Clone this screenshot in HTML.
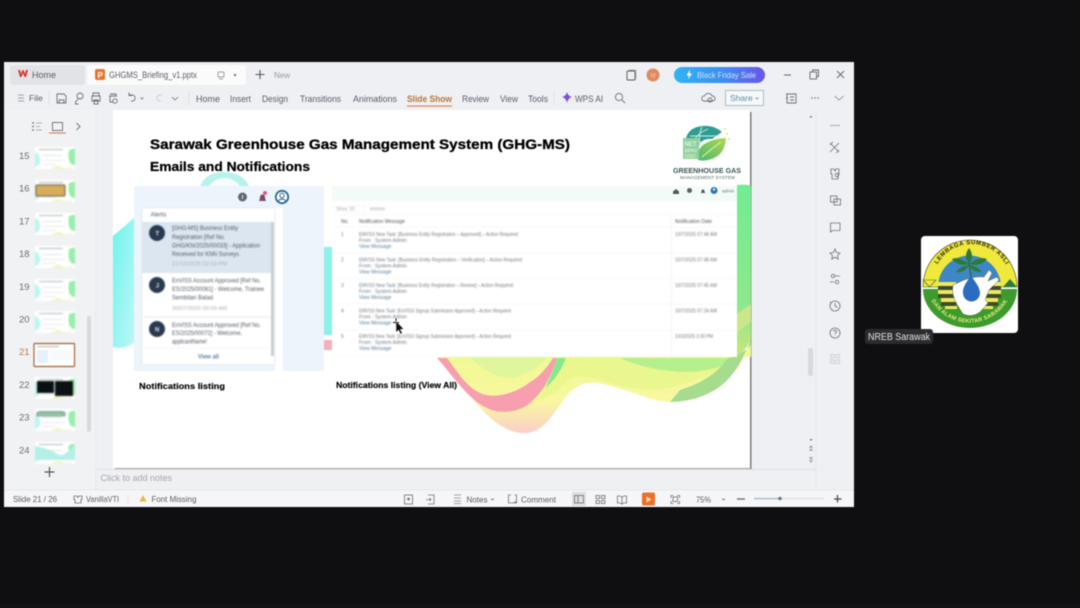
<!DOCTYPE html>
<html><head><meta charset="utf-8">
<style>
html,body{margin:0;padding:0;background:#0f0f11;width:1080px;height:608px;overflow:hidden}
svg{display:block;filter:blur(.4px)}
text{font-family:"Liberation Sans",sans-serif}
.t{font-size:9.5px;fill:#595d65}
.m{font-size:5px;fill:#777c84}
.a{font-size:6.2px;fill:#555b63}
.d{font-size:5.5px;fill:#aeb2b8}
.i{fill:none;stroke:#6a6e75;stroke-width:.9}
.r{fill:none;stroke:#70747a;stroke-width:.85}
.h{font-weight:bold;fill:#000}
.n{font-size:9.5px;fill:#6a6e74}
.soft{filter:blur(.45px)}
.thb{filter:blur(.7px)}
</style></head>
<body>
<svg width="1080" height="608" viewBox="0 0 1080 608" xmlns="http://www.w3.org/2000/svg">
<defs>
<linearGradient id="cy" x1="0" y1="0" x2="1" y2="1"><stop offset="0" stop-color="#6ff3ec"/><stop offset="1" stop-color="#bdf8f6"/></linearGradient>
<linearGradient id="gr" x1="0" y1="0" x2="0" y2="1"><stop offset="0" stop-color="#72ec94"/><stop offset=".7" stop-color="#8ee88c"/><stop offset="1" stop-color="#c8e67c"/></linearGradient>
<linearGradient id="bf" x1="0" y1="0" x2="1" y2="0"><stop offset="0" stop-color="#2fb4f5"/><stop offset=".55" stop-color="#3f8cf2"/><stop offset="1" stop-color="#6a55e8"/></linearGradient>
<linearGradient id="wv" x1="0" y1="0" x2="0" y2="1"><stop offset="0" stop-color="#edfa8e"/><stop offset=".65" stop-color="#f9f8a0"/><stop offset="1" stop-color="#fbcfc8"/></linearGradient>
<linearGradient id="lf" x1="0" y1="1" x2="1" y2="0"><stop offset="0" stop-color="#4cb870"/><stop offset="1" stop-color="#b0d84a"/></linearGradient>
<g id="th">
<rect width="40" height="22" fill="#fff"/>
<path d="M0 5Q4 6 5 12T0 20Z" fill="#bcf6f2"/>
<path d="M34 3Q40 1 40 2V18Q35 18 34 13T34 3Z" fill="#98eeab"/>
<path d="M16 22Q22 17 27 20T36 19V22Z" fill="#f0f6c8"/>
<rect x="4" y="2" width="24" height="1" fill="#b0b8ba"/>
<rect x="7" y="8" width="20" height=".7" fill="#d4dadc"/>
<rect x="7" y="13" width="22" height=".7" fill="#dce2e4"/>
<rect x="7" y="17" width="14" height=".7" fill="#dce2e4"/>
</g>
<clipPath id="ringclip"><path d="M923 280H1017V290A47 40 0 0 1 923 290Z"/></clipPath>
</defs>

<rect width="1080" height="608" fill="#0f0f11"/>
<rect x="0" y="604" width="1080" height="4" fill="#141416"/>

<!-- window -->
<rect x="4" y="62" width="850" height="445" fill="#eff0f3"/>
<rect x="10" y="65" width="75" height="20" rx="3" fill="#e2e3e6"/>
<rect x="87" y="65" width="159" height="20" rx="3" fill="#fbfbfc"/>
<path d="M18 70h2l1 4 1.500-4h1l1.500 4 1-4h2l-2 7h-1.500l-1.500-4-1.500 4h-1.500z" fill="#d8342c"/>
<text x="32" y="78" class="t" style="font-size:9px">Home</text>
<rect x="95" y="69" width="10" height="11" rx="2" fill="#e8742c"/>
<text x="97.500" y="78" style="font-size:8px;font-weight:bold" fill="#fff">P</text>
<text x="109" y="78" class="t" style="font-size:9px" textLength="88" lengthAdjust="spacingAndGlyphs">GHGMS_Briefing_v1.pptx</text>
<rect x="218" y="72" width="6" height="5" rx="1" class="i" style="stroke:#999"/>
<path d="M219 79h4" class="i" style="stroke:#999"/>
<circle cx="235" cy="75" r="1.200" fill="#777"/>
<path d="M260 70v9M255.500 74.500h9" stroke="#555" stroke-width="1.100"/>
<text x="274" y="78" style="font-size:8px" fill="#999">New</text>

<rect x="627" y="71" width="8" height="9" rx="1" class="i" style="stroke:#555"/><path d="M629 70h7v9" class="i" style="stroke:#999;stroke-width:.7"/>
<circle cx="653" cy="75" r="6.500" fill="#e28a5e"/><text x="650.500" y="77.500" style="font-size:6px" fill="#f6c9b0">M</text>
<rect x="674" y="67" width="91" height="16" rx="8" fill="url(#bf)"/>
<path d="M690 69.500l-3.500 6h2.500l-1 4 4-6h-2.500z" fill="#fff"/>
<text x="697" y="78" style="font-size:8.500px" fill="#cfe0fb" textLength="59" lengthAdjust="spacingAndGlyphs">Black Friday Sale</text>
<path d="M784 75h7" stroke="#666" stroke-width="1"/>
<rect x="810" y="72" width="6.500" height="7" class="i" style="stroke:#666"/><path d="M812.500 72v-2h6v6.500h-2" class="i" style="stroke:#666"/>
<path d="M837 71l7 7M844 71l-7 7" stroke="#666" stroke-width=".9"/>

<!-- toolbar -->
<path d="M18 95h6M18 98h6M18 101h6" stroke="#888" stroke-width=".8"/>
<text x="29" y="101" class="t" style="font-size:8.500px">File</text>
<path d="M49 91v14" stroke="#dfe0e3"/>
<path d="M57 94h7l2 2v7h-9zM59 103v-3h5v3" class="i"/>
<circle cx="80" cy="96" r="3" class="i"/><path d="M78 99l-2.500 3v2h3" class="i"/>
<path d="M93 96v-3h6v3M92 96h8v5h-8zM94 100h4v4h-4z" class="i"/>
<path d="M110 94h6v2M109 96h8M110 96v6h3" class="i"/><circle cx="115" cy="101" r="2.200" class="i"/>
<path d="M129 95h4a3 3 0 1 1-2 6" class="i"/><path d="M129 92.500v3h3" class="i"/>
<path d="M140.500 97.500l1.500 1.500 1.500-1.500" class="i" style="stroke-width:.8"/>
<path d="M162 95h-3a3 3 0 1 0 2 6" class="i" style="stroke:#c9cbcf"/>
<path d="M172 97l3 3 3-3" class="i" style="stroke:#888"/>
<path d="M189 91v14" stroke="#dfe0e3"/>
<g class="t">
<text x="196" y="102" textLength="24" lengthAdjust="spacingAndGlyphs">Home</text>
<text x="230" y="102" textLength="21" lengthAdjust="spacingAndGlyphs">Insert</text>
<text x="262" y="102" textLength="26" lengthAdjust="spacingAndGlyphs">Design</text>
<text x="300" y="102" textLength="41" lengthAdjust="spacingAndGlyphs">Transitions</text>
<text x="353" y="102" textLength="44" lengthAdjust="spacingAndGlyphs">Animations</text>
<text x="462" y="102" textLength="27" lengthAdjust="spacingAndGlyphs">Review</text>
<text x="500" y="102" textLength="18" lengthAdjust="spacingAndGlyphs">View</text>
<text x="528" y="102" textLength="20" lengthAdjust="spacingAndGlyphs">Tools</text>
<text x="575" y="102" textLength="28" lengthAdjust="spacingAndGlyphs">WPS AI</text>
</g>
<text x="407" y="102" style="font-size:9.500px;font-weight:bold" fill="#b8763f" textLength="45" lengthAdjust="spacingAndGlyphs">Slide Show</text>
<rect x="407" y="105.500" width="45" height="1.200" fill="#d98a5a"/>
<path d="M554 91v14" stroke="#e2e3e6"/>
<path d="M567 92q1 4 5 5q-4 1-5 6q-1-5-5-6q4-1 5-5z" fill="#7a52e0"/>
<circle cx="619" cy="97" r="3.600" class="i"/><path d="M622 100l3 3" class="i"/>
<path d="M704 101a2.500 2.500 0 0 1 .5-5a4 4 0 0 1 7.500 0a2.500 2.500 0 0 1 1 5z" class="i"/><circle cx="710" cy="100" r="2" class="i"/>
<rect x="725.500" y="90.500" width="38" height="15" fill="#f7f8fa" stroke="#a9bdc9"/>
<text x="730" y="101" style="font-size:8.500px" fill="#5d8aa3">Share</text>
<path d="M755.500 97.500l1.500 1.500 1.500-1.500" class="i" style="stroke:#888;stroke-width:.8"/>
<path d="M787 94h9v9h-9zM786 98h2M786 94h2M790 97h4M790 100h4" class="i"/>
<circle cx="812" cy="98" r=".7" fill="#666"/><circle cx="815" cy="98" r=".7" fill="#666"/><circle cx="818" cy="98" r=".7" fill="#666"/>
<path d="M834.500 96l4.500 4 4.500-4" class="i" style="stroke:#999"/>

<!-- left panel -->
<rect x="4" y="110" width="92" height="380" fill="#f1f2f4"/>
<path d="M96 110v380" stroke="#e6e7ea"/>
<path d="M32 123h2M32 126.500h2M32 130h2" stroke="#777" stroke-width="1.200"/><path d="M36 123h6M36 126.500h4M36 130h6" stroke="#999" stroke-width=".8"/>
<rect x="52.500" y="122.500" width="10" height="8" class="i"/>
<rect x="49" y="132.500" width="17" height="1" fill="#d4724a"/>
<path d="M76.500 123l3.500 3.500-3.500 3.500" class="i"/>
<text x="19" y="159" class="n">15</text><text x="19" y="191.500" class="n">16</text><text x="19" y="224.500" class="n">17</text><text x="19" y="257" class="n">18</text><text x="19" y="290" class="n">19</text><text x="19" y="322.500" class="n">20</text>
<text x="19" y="355" class="n" style="fill:#b77a50">21</text><text x="19" y="388" class="n">22</text><text x="19" y="420.500" class="n">23</text><text x="19" y="453.500" class="n">24</text>
<g class="thb">
<use href="#th" x="35" y="147"/>
<use href="#th" x="35" y="180"/><rect x="36" y="185" width="29" height="11" rx="1" fill="#d6ad5c" stroke="#5e5a40"/>
<use href="#th" x="35" y="213"/>
<use href="#th" x="35" y="246"/>
<use href="#th" x="35" y="279"/>
<use href="#th" x="35" y="311"/>
<use href="#th" x="35" y="377"/><rect x="37" y="381" width="17" height="12" fill="#081014"/><rect x="55" y="381" width="18" height="15" fill="#0c1214"/>
<use href="#th" x="35" y="409"/><rect x="37" y="412" width="28" height="4" rx="1" fill="#8fc9a8" stroke="#4c6a5a" stroke-width=".6"/>
<use href="#th" x="35" y="442"/><path d="M35 446q16 3 22 8t18-10v16H35z" fill="#b4f0e8"/>
</g>
<rect x="34" y="343.500" width="40.500" height="23" rx="1" fill="#fff" stroke="#b27a50" stroke-width="1.400"/>
<g class="thb"><rect x="37" y="350" width="11" height="13" fill="#e4f0fa"/><rect x="50" y="350" width="22" height="10" fill="#f7f9fa"/><rect x="37" y="346" width="22" height="1" fill="#aab"/></g>
<rect x="87" y="316" width="4" height="116" rx="2" fill="#d8d9dc"/>
<path d="M49.500 467v10M44.500 472h10" stroke="#555" stroke-width="1.200"/>

<!-- canvas -->
<rect x="96" y="110" width="720" height="359" fill="#eff0f3"/>
<rect x="115" y="112" width="636.500" height="357.500" fill="#a2a2a2"/>
<rect x="750" y="112" width="1.500" height="358" fill="#7d7d7d"/>
<rect x="113" y="110" width="637" height="358" fill="#fff"/>

<!-- slide decorations -->
<path d="M113 236L134 218V343Q124 350 113 347Z" fill="url(#cy)"/>
<path d="M200 186Q206 172 224 172Q242 172 249 186Z" fill="#b7f3ec"/>
<path d="M209 186Q215 178 224 178Q234 178 240 186Z" fill="#f4fdfc"/>
<rect x="324" y="247" width="8" height="88" fill="#8df0ea"/>
<rect x="324" y="340" width="8" height="10" fill="#f4b0ba"/>
<path d="M737 185Q748 184 751 186V340Q746 350 737 357Z" fill="url(#gr)"/>
<path d="M737 314L751 304V322L737 332Z" fill="#d8e68c" opacity=".8"/>
<path d="M437 357C463 380 487 432 523 433C550 435 560 395 577 387C590 378 610 385 640 395C670 408 695 402 725 380C740 370 745 355 751 340V357Z" fill="url(#wv)"/>
<path d="M470 357Q490 378 512 378Q535 372 548 357Z" fill="#dff79a"/>
<path d="M437 358C450 372 468 400 487 408C500 415 520 412 530 403C542 393 551 378 557 358L553 358C547 368 538 378 530 382C518 392 495 400 480 393C465 386 455 368 447 358Z" fill="#f79fae"/>
<path d="M557 358C552 378 544 392 536 402C550 397 560 390 566 382C572 376 584 375 600 380C625 388 645 392 668 388C695 382 725 370 742 357Z" fill="#eaf78e"/>
<path d="M557 358Q552 375 545 388Q558 378 566 358Z" fill="#84ea8c"/>
<path d="M620 358Q650 372 690 372Q720 370 742 358Z" fill="#b6f08c"/>
<path d="M670 402C690 402 715 395 730 377C740 365 746 352 751 340V345C745 352 735 357 728 358C718 372 705 382 680 390Z" fill="#a6dc8e"/>

<text x="150" y="149" class="h" style="font-size:14px;stroke:#000;stroke-width:.3" textLength="420" lengthAdjust="spacingAndGlyphs">Sarawak Greenhouse Gas Management System (GHG-MS)</text>
<text x="150" y="171" class="h" style="font-size:13px;stroke:#000;stroke-width:.25" textLength="160" lengthAdjust="spacingAndGlyphs">Emails and Notifications</text>

<!-- logo -->
<path d="M685 146Q685 127 703 126Q714 125 722 132L712 139Q702 138 699 146Z" fill="#2f9c92"/>
<path d="M692 146Q695 134 708 129M702 127Q698 135 700 146M690 136L716 136M687 142H702" fill="none" stroke="#d4eee9" stroke-width=".9"/>
<path d="M698 160Q696 148 706 143Q716 138 726 138Q725 152 716 157Q707 162 698 160Z" fill="url(#lf)"/>
<path d="M702 157Q710 150 721 142" stroke="#e8f3cc" stroke-width=".9" fill="none"/>
<rect x="683" y="138" width="16" height="21" fill="#8fd1a0"/>
<text x="684.500" y="146" style="font-size:6px" fill="#fff">NET</text><text x="684.500" y="152" style="font-size:4.500px" fill="#fff">ZERO</text><text x="684.500" y="158" style="font-size:5px" fill="#eef6b0">2050</text>
<circle cx="727" cy="134" r=".9" fill="#d8cc60"/><circle cx="729" cy="139" r=".9" fill="#d8cc60"/><circle cx="725" cy="129" r=".9" fill="#bcd890"/>
<text x="673" y="173" style="font-size:7.500px;font-weight:bold" fill="#3f5656" textLength="68" lengthAdjust="spacingAndGlyphs">GREENHOUSE GAS</text>
<text x="680" y="179" style="font-size:4.500px" fill="#566c6c" textLength="55" lengthAdjust="spacingAndGlyphs">MANAGEMENT SYSTEM</text>

<!-- left screenshot -->
<rect x="134" y="186" width="190" height="185" fill="#edf4fb"/>
<rect x="275" y="208" width="8" height="163" fill="#fff"/>
<circle cx="242.500" cy="197" r="4.500" fill="#5e6a74"/><rect x="242" y="195" width="1" height="4" fill="#ddd"/>
<path d="M259 201q1-2 1-4a2.500 2.500 0 0 1 5 0q0 2 1 4z" fill="#7a4a68"/><circle cx="265" cy="193" r="2" fill="#e05a78"/>
<circle cx="282" cy="197" r="6.200" fill="#fff" stroke="#2c6a92" stroke-width="1.800"/><circle cx="282" cy="195.500" r="2.200" fill="none" stroke="#2c6a92"/><path d="M278 201q4-4 8 0" fill="none" stroke="#2c6a92"/>
<rect x="142" y="208" width="133" height="156.500" rx="2" fill="#fff" stroke="#dde2e8" stroke-width=".6"/>
<g class="soft">
<text x="150.500" y="216.500" class="a">Alerts</text>
<rect x="142" y="222" width="131" height="51" fill="#dbe6f1"/>
<rect x="271" y="222" width="3" height="134" fill="#c6ccd3"/>
<path d="M143 317h129" stroke="#d2d6da" stroke-width=".6"/>
<path d="M143 348h130" stroke="#eceef0" stroke-width=".6"/>
<circle cx="157" cy="233" r="8" fill="#2a3a4e"/><text x="155.500" y="235.500" style="font-size:6px;font-weight:bold" fill="#dfe6ee">T</text>
<circle cx="157" cy="285" r="8" fill="#2a3a4e"/><text x="155.800" y="287.500" style="font-size:6px;font-weight:bold" fill="#dfe6ee">J</text>
<circle cx="157" cy="329" r="8" fill="#2a3a4e"/><text x="155" y="331.500" style="font-size:6px;font-weight:bold" fill="#dfe6ee">N</text>
<text x="172" y="230" class="a" textLength="66" lengthAdjust="spacingAndGlyphs">[GHG-MS] Business Entity</text>
<text x="172" y="239" class="a" textLength="53" lengthAdjust="spacingAndGlyphs">Registration [Ref No.</text>
<text x="172" y="247.500" class="a" textLength="88" lengthAdjust="spacingAndGlyphs">GHG/KN/2025/00033] - Application</text>
<text x="172" y="256" class="a" textLength="67" lengthAdjust="spacingAndGlyphs">Received for KNN Surveys</text>
<text x="172" y="265.500" class="d" textLength="55" lengthAdjust="spacingAndGlyphs">21/10/2025 02:19 PM</text>
<text x="172" y="282.500" class="a" textLength="89" lengthAdjust="spacingAndGlyphs">EnVISS Account Approved [Ref No.</text>
<text x="172" y="291" class="a" textLength="92" lengthAdjust="spacingAndGlyphs">ES/2025/00081] - Welcome, Trainee</text>
<text x="172" y="299.500" class="a" textLength="41" lengthAdjust="spacingAndGlyphs">Sembilan Balad</text>
<text x="172" y="310" class="d" textLength="55" lengthAdjust="spacingAndGlyphs">30/07/2025 09:09 AM</text>
<text x="172" y="327" class="a" textLength="89" lengthAdjust="spacingAndGlyphs">EnVISS Account Approved [Ref No.</text>
<text x="172" y="335" class="a" textLength="70" lengthAdjust="spacingAndGlyphs">ES/2025/00072] - Welcome,</text>
<text x="172" y="343.500" class="a" textLength="35" lengthAdjust="spacingAndGlyphs">applicantName!</text>
<text x="198" y="358.500" style="font-size:6.800px;font-weight:bold" fill="#5a86a8" textLength="21" lengthAdjust="spacingAndGlyphs">View all</text>
</g>

<!-- right screenshot -->
<rect x="332" y="186" width="405" height="171" fill="#fff"/>
<rect x="332" y="186" width="405" height="15" fill="#f3fbf8"/>
<path d="M673 191.500l3-2.500 3 2.500v2.500h-6z" fill="#555"/>
<circle cx="689.500" cy="190.500" r="2.500" fill="#606060"/>
<path d="M700.500 193l1-1v-1a1.500 1.500 0 0 1 3 0v1l1 1z" fill="#555"/>
<circle cx="714" cy="190.500" r="3.500" fill="#2a78b0"/><circle cx="714" cy="189.500" r="1.200" fill="#e8f2f8"/>
<text x="722" y="192.500" style="font-size:4.500px" fill="#777">admin</text>
<g class="soft">
<text x="336" y="210.500" class="m" style="fill:#aaa">Show</text><rect x="347" y="206" width="18" height="6" fill="#fff" stroke="#eee" stroke-width=".5"/><text x="349" y="210.500" class="m" style="fill:#aaa">10</text>
<text x="370" y="210.500" class="m" style="fill:#aaa">entries</text>
<path d="M336 214.500H737M336 227H737M336 253H737M336 278.500H737M336 304H737M336 330H737M336 356H737" stroke="#f1f2f4" stroke-width=".6"/>
<path d="M671.500 214v142" stroke="#eceef0" stroke-width=".6"/>
<text x="341" y="223" class="m" style="fill:#555">No.</text>
<text x="359" y="223" class="m" style="fill:#555" textLength="46" lengthAdjust="spacingAndGlyphs">Notification Message</text>
<text x="675" y="223" class="m" style="fill:#555" textLength="37" lengthAdjust="spacingAndGlyphs">Notification Date</text>

<text x="341" y="236" class="m">1</text>
<text x="359" y="236" class="m" textLength="159" lengthAdjust="spacingAndGlyphs">EMVSS New Task: [Business Entity Registration – Approved] – Action Required</text>
<text x="359" y="242" class="m">From : System Admin</text><text x="359" y="248" class="m" style="fill:#5a7f9c">View Message</text>
<text x="675" y="236" class="m" textLength="42" lengthAdjust="spacingAndGlyphs">10/7/2025 07:48 AM</text>

<text x="341" y="261.500" class="m">2</text>
<text x="359" y="261.500" class="m" textLength="163" lengthAdjust="spacingAndGlyphs">EMVSS New Task: [Business Entity Registration – Verification] – Action Required</text>
<text x="359" y="267.500" class="m">From : System Admin</text><text x="359" y="273.500" class="m" style="fill:#5a7f9c">View Message</text>
<text x="675" y="261.500" class="m" textLength="42" lengthAdjust="spacingAndGlyphs">10/7/2025 07:48 AM</text>

<text x="341" y="287" class="m">3</text>
<text x="359" y="287" class="m" textLength="154" lengthAdjust="spacingAndGlyphs">EMVSS New Task: [Business Entity Registration – Review] – Action Required</text>
<text x="359" y="293" class="m">From : System Admin</text><text x="359" y="299" class="m" style="fill:#5a7f9c">View Message</text>
<text x="675" y="287" class="m" textLength="42" lengthAdjust="spacingAndGlyphs">10/7/2025 07:45 AM</text>

<text x="341" y="312.500" class="m">4</text>
<text x="359" y="312.500" class="m" textLength="152" lengthAdjust="spacingAndGlyphs">EMVSS New Task: [EnVISS Signup Submission Approved] – Action Required</text>
<text x="359" y="318.500" class="m">From : System Admin</text><text x="359" y="324.500" class="m" style="fill:#5a7f9c">View Message</text>
<text x="675" y="312.500" class="m" textLength="42" lengthAdjust="spacingAndGlyphs">10/7/2025 07:34 AM</text>

<text x="341" y="338" class="m">5</text>
<text x="359" y="338" class="m" textLength="152" lengthAdjust="spacingAndGlyphs">EMVSS New Task: [EnVISS Signup Submission Approved] – Action Required</text>
<text x="359" y="344" class="m">From : System Admin</text><text x="359" y="350" class="m" style="fill:#5a7f9c">View Message</text>
<text x="675" y="338" class="m" textLength="38" lengthAdjust="spacingAndGlyphs">10/3/2025 3:30 PM</text>
</g>

<!-- cursor -->
<path d="M396 318.500v5M393 322.500h6" stroke="#000" stroke-width="1"/>
<path d="M396 321l0 11.500 2.500-2.500 2 4 1.800-.8-2-3.800 3.500-.2z" fill="#111" stroke="#eee" stroke-width=".5"/>

<text x="139" y="389" class="h" style="font-size:8.500px;stroke:#000;stroke-width:.15" textLength="86" lengthAdjust="spacingAndGlyphs">Notifications listing</text>
<text x="336" y="388" class="h" style="font-size:8.500px;stroke:#000;stroke-width:.15" textLength="121" lengthAdjust="spacingAndGlyphs">Notifications listing (View All)</text>

<!-- right scroll / toolbar -->
<path d="M816 110v397" stroke="#e6e7ea"/>
<path d="M809.500 117.500l1.500-2 1.500 2z" fill="#777"/>
<rect x="808" y="348" width="5" height="28" rx="2" fill="#d8d9dc"/>
<path d="M809.500 439h3l-1.500 2z" fill="#777"/><path d="M809.500 448l1.500-2 1.500 2M809.500 451l1.500-2 1.500 2M809.500 457l1.500 2 1.500-2M809.500 460l1.500 2 1.500-2" fill="none" stroke="#777" stroke-width=".7"/>
<path d="M830 125.500h10" stroke="#aaa" stroke-width="1"/>
<path d="M830 143l9 9M839 143l-9 9M830 145l3-3M836 153l3-3" class="r"/>
<path d="M831 169h3l1 2 1-2h3v5h-1v5h-6v-5h-1z" class="r"/><circle cx="837" cy="175" r="1.800" class="r"/>
<rect x="830.500" y="196" width="6.500" height="6" class="r"/><rect x="834" y="199" width="6.500" height="6" class="r"/>
<path d="M830.500 223h9.500v7.500h-7.500l-2 1.500z" class="r"/>
<path d="M835 249l1.500 3.500 3.500.5-2.500 2.500.7 3.500-3.200-1.800-3.200 1.800.7-3.500-2.500-2.500 3.500-.5z" class="r"/>
<circle cx="833" cy="276" r="1.700" class="r"/><path d="M835 276h5M830 282h4" class="r"/><circle cx="837" cy="282" r="1.700" class="r"/>
<circle cx="835" cy="306" r="5" class="r"/><path d="M835 303v3l2.500 1.500M830 302l1 1" class="r"/>
<circle cx="835" cy="333" r="5" class="r"/><path d="M833.500 331.500a1.500 1.500 0 1 1 2 1.500l-.5 1M835 335.500v.5" class="r"/>
<g fill="none" stroke="#c9cbcf" stroke-width=".8"><rect x="830.500" y="354.500" width="3.500" height="3.500"/><rect x="836" y="354.500" width="3.500" height="3.500"/><rect x="830.500" y="360" width="3.500" height="3.500"/><rect x="836" y="360" width="3.500" height="3.500"/></g>

<!-- notes -->
<path d="M96 469.500H816" stroke="#dedfe2"/>
<text x="100.500" y="481" style="font-size:9px" fill="#a4a7ac">Click to add notes</text>

<!-- status bar -->
<rect x="4" y="490" width="850" height="17" fill="#f6f6f8"/>
<path d="M4 490H854" stroke="#e6e7ea"/>
<text x="13" y="502" class="t" style="font-size:8.500px" textLength="44" lengthAdjust="spacingAndGlyphs">Slide 21 / 26</text>
<path d="M74 496h3l1 1.500 1-1.500h3v3.500h-1v3.500h-6v-3.500h-1z" class="r"/>
<text x="86" y="502" class="t" style="font-size:8.500px" textLength="33" lengthAdjust="spacingAndGlyphs">VanillaVTI</text>
<path d="M128 494v11" stroke="#ece3e3"/>
<path d="M143 495l3.500 6.500h-7z" fill="#e8b84a"/>
<text x="151.500" y="502" class="t" style="font-size:8.500px" textLength="45" lengthAdjust="spacingAndGlyphs">Font Missing</text>
<rect x="404.500" y="495" width="8" height="9" class="r"/><circle cx="408.500" cy="499" r="1.300" fill="#666"/>
<path d="M428 495h6v9h-6M426 499.500h5M429.500 498l1.500 1.500-1.500 1.500" class="r"/>
<path d="M454 495h7M454 498h7M454 501h7M454 503.500h7" stroke="#888" stroke-width=".7"/>
<text x="466.500" y="502.500" class="t" style="font-size:8.500px" textLength="21" lengthAdjust="spacingAndGlyphs">Notes</text>
<path d="M491 498.500l1.500 1.500 1.500-1.500" class="r"/>
<path d="M511 495h-2.500v8h8v-8h-2" class="r"/><path d="M514 502h3" class="r"/>
<text x="521" y="502.500" class="t" style="font-size:8.500px" textLength="35" lengthAdjust="spacingAndGlyphs">Comment</text>
<rect x="572" y="492" width="14" height="14" fill="#dfe0e3"/>
<rect x="574.500" y="495.500" width="9" height="7.500" class="r"/><path d="M578 495.500v7.500" class="r"/>
<g class="r"><rect x="596" y="495.500" width="3.500" height="3"/><rect x="601.500" y="495.500" width="3.500" height="3"/><rect x="596" y="500.500" width="3.500" height="3"/><rect x="601.500" y="500.500" width="3.500" height="3"/></g>
<path d="M622 497q-2.500-1.500-4.500-1v7q2.500-.5 4.500 1q2-1.500 4.500-1v-7q-2-.5-4.500 1zM622 497v7" class="r"/>
<rect x="642" y="492.500" width="13" height="13" rx="2" fill="#e8702c"/>
<path d="M646.500 496.500v6l5-3z" fill="#f8e6a0"/>
<path d="M671 498v-2.500h2.500M677 495.500h2.500v2.500M679.500 501v2.500h-2.500M673.500 503.500h-2.500v-2.500" class="r"/><rect x="673" y="497" width="4.500" height="4.500" class="r"/>
<text x="696" y="502.500" class="t" style="font-size:8.500px" textLength="15" lengthAdjust="spacingAndGlyphs">75%</text>
<path d="M722 498.500l1.500 1.500 1.500-1.500" class="r"/>
<path d="M737 499h8" stroke="#666" stroke-width="1.300"/>
<rect x="754" y="498" width="70" height="1" fill="#d6d8db"/>
<rect x="754" y="498" width="26" height="1.200" fill="#9ab4c6"/>
<circle cx="780" cy="498.500" r="1.800" fill="#777"/>
<path d="M837.500 495v7.500M834 499h7.500" stroke="#444" stroke-width="1.200"/>

<!-- participant tile -->
<rect x="921" y="236" width="97" height="97" rx="4" fill="#fff"/>
<path d="M923 287A47 47 0 0 1 1017 287Z" fill="#f0e83a" stroke="#3a3a20" stroke-width=".6"/>
<path d="M938 287A31.500 31.500 0 0 1 1001 287Z" fill="#3f86c4"/>
<path d="M923 289H1017A47 39 0 0 1 923 289Z" fill="#3d9a2c"/>
<path d="M923 280h13l-6.500 7z" fill="#f0e83a" stroke="#2c6a2c" stroke-width=".6"/>
<path d="M1003 287l7-8 7 8z" fill="#2e7a3a"/>
<!-- stripes -->
<path d="M938 282h18v4h-18zM938 290h17v4h-17zM941 298h15v4h-15zM945 306h12v3h-12z" fill="#f0e860"/>
<path d="M938 286h18v4h-18zM938 294h17v4h-17zM941 302h15v4h-15z" fill="#3c4c28"/>
<path d="M984 282h17v4h-17zM985 290h16v4h-16zM984 298h14v4h-14zM982 306h11v3h-11z" fill="#f0e860"/>
<path d="M984 286h17v4h-17zM985 294h16v4h-16zM984 302h14v4h-14z" fill="#3c4c28"/>
<!-- hand -->
<path d="M953 285L964 280Q975 276 984 277L989 270L992 273L988 281L997 277L999 280L989 290L985 300L988 303L980 312Q972 318 963 314L958 306Q951 295 953 285Z" fill="#fff" stroke="#3c4c28" stroke-width=".4"/>
<path d="M971 276q-9 11-8 17a8.500 8.500 0 0 0 17 0q0-6-9-17z" fill="#2c6cc0"/>
<path d="M969 264q-11-8-17-5q6 8 17 5zM969 264q11-8 18-5q-6 8-18 5zM969 264q-6-8 0-16q6 8 0 16zM969 265q-8 1-13 7q9 1 13-7zM969 265q8 1 13 7q-9 1-13-7z" fill="#2c7a34"/>
<path d="M969 263l2 14" stroke="#2c5a2c" stroke-width="1"/>
<path id="arc1" d="M937 265A39 39 0 0 1 1006 265" fill="none"/>
<path id="arc2" d="M931 300A44 44 0 0 0 1008 300" fill="none"/>
<text style="font-size:6px;font-weight:bold" fill="#2a2a10" letter-spacing=".55"><textPath href="#arc1" startOffset="1%">LEMBAGA SUMBER ASLI</textPath></text>
<text style="font-size:5.600px;font-weight:bold" fill="#e8ee80" letter-spacing=".25"><textPath href="#arc2" startOffset="1%">DAN ALAM SEKITAR SARAWAK</textPath></text>
<rect x="865" y="329" width="68" height="15" rx="3" fill="#2c2c2e"/>
<text x="868" y="340" style="font-size:10px" fill="#e4e4e4" textLength="62" lengthAdjust="spacingAndGlyphs">NREB Sarawak</text>
</svg>
</body></html>
